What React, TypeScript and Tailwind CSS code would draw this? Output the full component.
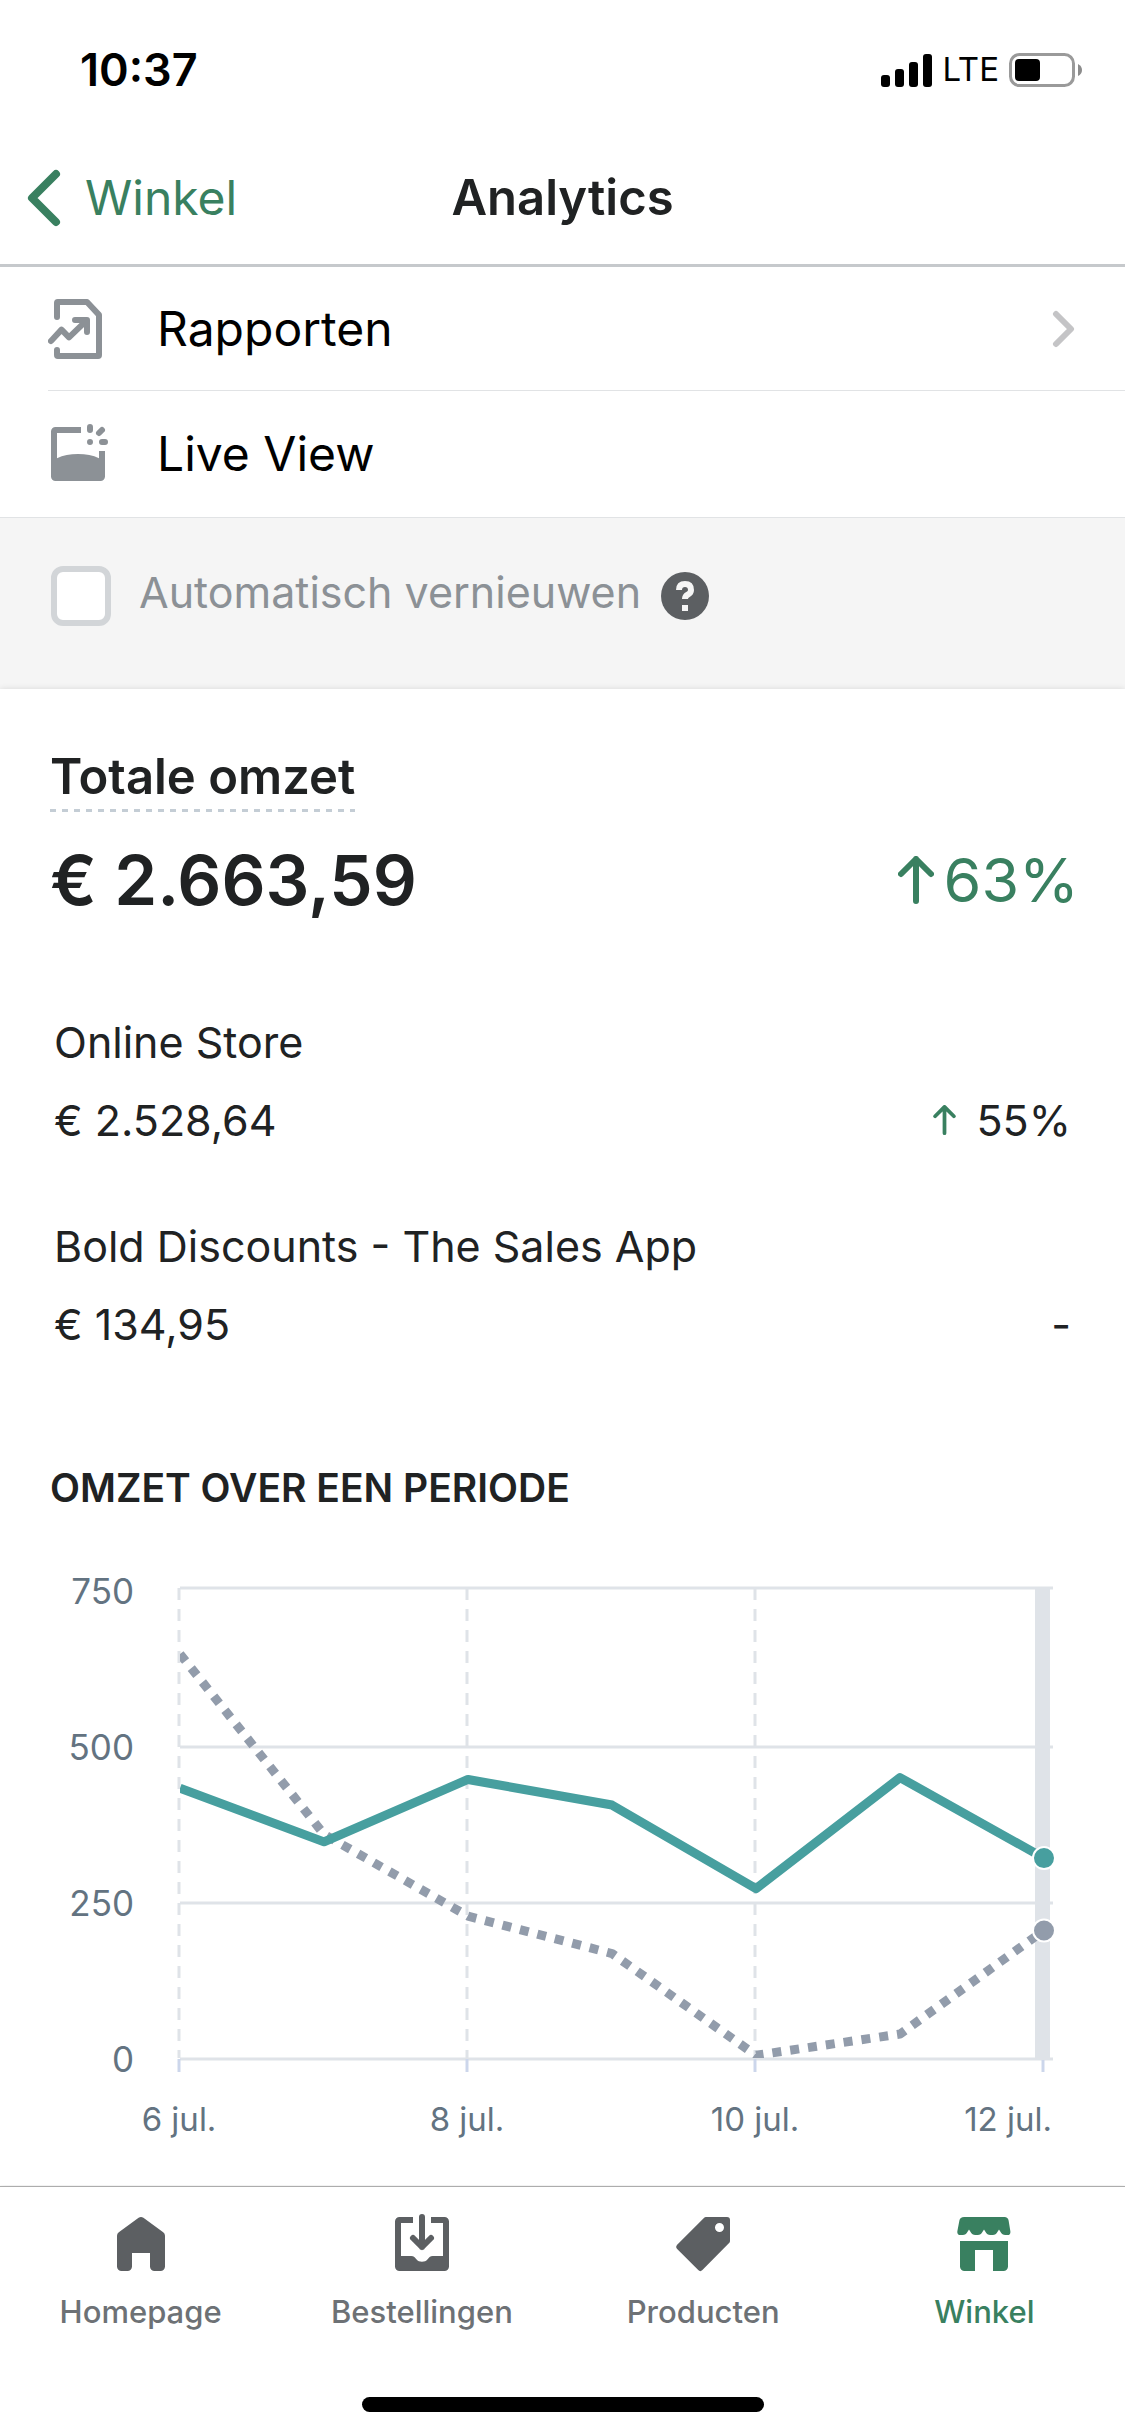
import type { ReactNode } from "react";

type Point = { label: string; current: number; previous: number };

const revenue: Point[] = [
  { label: "6 jul.", current: 434, previous: 649 },
  { label: "7 jul.", current: 348, previous: 360 },
  { label: "8 jul.", current: 448, previous: 229 },
  { label: "9 jul.", current: 407, previous: 169 },
  { label: "10 jul.", current: 273, previous: 6 },
  { label: "11 jul.", current: 451, previous: 40 },
  { label: "12 jul.", current: 322, previous: 206 },
];

const channels = [
  { name: "Online Store", amount: "€ 2.528,64", change: "55%" },
  { name: "Bold Discounts - The Sales App", amount: "€ 134,95", change: null },
];

function Icon({ children }: { children: ReactNode }) {
  return (
    <svg viewBox="0 0 20 20" className="size-[60px] shrink-0" fill="currentColor" aria-hidden="true">
      {children}
    </svg>
  );
}

function ReportIcon() {
  return (
    <Icon>
      <g fill="none" stroke="currentColor" strokeWidth="2" strokeLinecap="round" strokeLinejoin="round">
        <path d="M3 6V1.3Q3 1 3.3 1H13L17 5.3V18.7Q17 19 16.7 19H3.3Q3 19 3 18.7V17" />
        <path d="M1 14L4.5 10.2L7 12.8L12.8 7.2M9 7H13V11" />
      </g>
    </Icon>
  );
}

function LiveViewIcon() {
  return (
    <Icon>
      <path d="M2.5 1H11V3H3V11.4Q6 10 10 10T17 11.4V9H19V17.5A1.5 1.5 0 0 1 17.5 19H2.5A1.5 1.5 0 0 1 1 17.5V2.5A1.5 1.5 0 0 1 2.5 1Z" />
      <path
        d="M14 1V2M17 3L18 2M18 6H19M14 6V6.01"
        fill="none"
        stroke="currentColor"
        strokeWidth="2"
        strokeLinecap="round"
      />
    </Icon>
  );
}

function HomeIcon() {
  return (
    <Icon>
      <path d="M18 7.26V17.5A1.5 1.5 0 0 1 16.5 19H14.5A1.5 1.5 0 0 1 13 17.5V13H7V17.5A1.5 1.5 0 0 1 5.5 19H3.5A1.5 1.5 0 0 1 2 17.5V7.26A1.5 1.5 0 0 1 2.6 6.05L9.2 1.23A1.48 1.48 0 0 1 10.8 1.23L17.4 6.05A1.5 1.5 0 0 1 18 7.26Z" />
    </Icon>
  );
}

function OrdersIcon() {
  return (
    <Icon>
      <path d="M2.5 1H7V3H3V14H6.4C7.3 14 7.7 14.6 8.2 15.2C8.9 16.2 11.1 16.2 11.8 15.2C12.3 14.6 12.7 14 13.6 14H17V3H13V1H17.5A1.5 1.5 0 0 1 19 2.5V17.5A1.5 1.5 0 0 1 17.5 19H2.5A1.5 1.5 0 0 1 1 17.5V2.5A1.5 1.5 0 0 1 2.5 1Z" />
      <path
        d="M10 1V11M7 8L10 11L13 8"
        fill="none"
        stroke="currentColor"
        strokeWidth="2"
        strokeLinecap="round"
        strokeLinejoin="round"
      />
    </Icon>
  );
}

function ProductsIcon() {
  return (
    <Icon>
      <path
        fillRule="evenodd"
        d="M11 1H18A1 1 0 0 1 19 2V9A1 1 0 0 1 18.7 9.7L9.8 18.7A1 1 0 0 1 8.4 18.7L1.3 11.6A1 1 0 0 1 1.3 10.3L10.3 1.3A1 1 0 0 1 11 1ZM15.5 6A1.5 1.5 0 1 0 15.5 3A1.5 1.5 0 1 0 15.5 6Z"
      />
    </Icon>
  );
}

function StoreIcon() {
  return (
    <Icon>
      <path d="M3.4 1H16.8Q18 1 18.2 2.2L18.8 5.8Q18.9 7 17.8 7H17Q16.2 7 15.8 6.4Q15.3 5.6 15.1 5.3Q15 5.1 14.9 5.3Q14.7 5.6 14.2 6.4Q13.8 7 13 7H12Q11.2 7 10.8 6.4Q10.3 5.6 10.1 5.3Q10 5.1 9.9 5.3Q9.7 5.6 9.2 6.4Q8.8 7 8 7H7Q6.2 7 5.8 6.4Q5.3 5.6 5.1 5.3Q5 5.1 4.9 5.3Q4.7 5.6 4.2 6.4Q3.8 7 3 7H2.2Q1 7 1.1 5.8L1.8 2.2Q2 1 3.4 1Z" />
      <path d="M2 9H18V17.5A1.5 1.5 0 0 1 16.5 19H13V12H7V19H3.5A1.5 1.5 0 0 1 2 17.5Z" />
    </Icon>
  );
}

function ArrowUp({ className }: { className: string }) {
  return (
    <svg viewBox="0 0 36 48" className={className} aria-hidden="true">
      <path
        d="M18 45V3M3 18L18 3L33 18"
        fill="none"
        stroke="currentColor"
        strokeWidth="6"
        strokeLinecap="round"
        strokeLinejoin="round"
      />
    </svg>
  );
}

function StatusBar() {
  return (
    <div className="flex h-[132px] items-center justify-between pt-2 pr-[43px] pl-20 text-black">
      <span className="text-[45px] font-semibold">10:37</span>
      <div className="flex items-center gap-2.5">
        <svg width="51" height="33" viewBox="0 0 51 33" aria-hidden="true">
          <rect x="0" y="21" width="9" height="12" rx="3" />
          <rect x="14" y="15" width="9" height="18" rx="3" />
          <rect x="28" y="8" width="9" height="25" rx="3" />
          <rect x="42" y="0" width="9" height="33" rx="3" />
        </svg>
        <span className="text-[33px]">LTE</span>
        <svg width="73" height="34" viewBox="0 0 73 34" aria-hidden="true">
          <rect x="1.5" y="1.5" width="63" height="31" rx="9" fill="none" stroke="#9a9a9a" strokeWidth="3" />
          <rect x="6" y="6" width="25" height="22" rx="4" />
          <path d="M69 11Q73 13 73 17T69 23Z" fill="#8c8c8c" />
        </svg>
      </div>
    </div>
  );
}

function Header() {
  return (
    <header className="grid h-[135px] grid-cols-3 items-center border-b-3 border-[#c6c9cc]">
      <button type="button" className="flex items-center gap-6 pl-[27px] text-[48px] text-[#398060]">
        <svg width="34" height="58" viewBox="0 0 34 58" aria-hidden="true">
          <path
            d="M29 5L5 29L29 53"
            fill="none"
            stroke="currentColor"
            strokeWidth="8"
            strokeLinecap="round"
            strokeLinejoin="round"
          />
        </svg>
        Winkel
      </button>
      <h1 className="text-center text-[49px] font-semibold">Analytics</h1>
    </header>
  );
}

function RevenueChart() {
  const left = 180;
  const step = 144;
  const bottom = 547;
  const unitsPerTick = 250;
  const tickHeight = 156;
  const x = (i: number) => left + i * step;
  const y = (value: number) => bottom - (value / unitsPerTick) * tickHeight;
  const line = (key: "current" | "previous") =>
    revenue.map((p, i) => `${x(i)},${y(p[key])}`).join(" ");
  const last = revenue.length - 1;

  return (
    <svg viewBox="0 0 1125 673" className="block h-auto w-full" role="img" aria-label="Omzet over een periode">
      <clipPath id="plot">
        <rect x="180" y="76" width="880" height="470" />
      </clipPath>

      <path d="M180 76H1053" stroke="#dfe3e8" strokeWidth="3" />
      {[0, 250, 500].map((value) => (
        <path key={value} d={`M180 ${y(value)}H1053`} stroke="#dfe3e8" strokeWidth="3" />
      ))}
      {[0, 250, 500, 750].map((value) => (
        <text key={value} x="134" y={y(value) + 13} textAnchor="end" className="fill-[#637381] text-[35px]">
          {value}
        </text>
      ))}

      {revenue.map(
        (p, i) =>
          i % 2 === 0 && (
            <g key={p.label}>
              <path d={`M${x(i) - 1} 76V546`} stroke="#dfe3e8" strokeWidth="3" strokeDasharray="12 9" />
              <path d={`M${x(i) - 1} 547V560`} stroke="#ccd6eb" strokeWidth="3" />
              <text
                x={i === last ? 1052 : x(i) - 1}
                y="619"
                textAnchor={i === last ? "end" : "middle"}
                className="fill-[#637381] text-[33px]"
              >
                {p.label}
              </text>
            </g>
          )
      )}

      <rect x="1035" y="75" width="15" height="473" fill="#dfe3e8" />

      <g clipPath="url(#plot)" fill="none" strokeWidth="9" strokeLinejoin="round">
        <polyline points={line("previous")} stroke="#929cab" strokeDasharray="9 9" />
        <polyline points={line("current")} stroke="#479f9f" />
      </g>
      <circle cx={x(last)} cy={y(revenue[last].current)} r="11" fill="#479f9f" stroke="#fff" strokeWidth="2" />
      <circle cx={x(last)} cy={y(revenue[last].previous)} r="11" fill="#929cab" stroke="#fff" strokeWidth="2" />
    </svg>
  );
}

const tabs = [
  { label: "Homepage", icon: <HomeIcon />, active: false },
  { label: "Bestellingen", icon: <OrdersIcon />, active: false },
  { label: "Producten", icon: <ProductsIcon />, active: false },
  { label: "Winkel", icon: <StoreIcon />, active: true },
];

export default function App() {
  return (
    <div className="flex min-h-screen flex-col bg-white font-['Inter',sans-serif] text-[#202223]">
      <StatusBar />
      <Header />

      <main className="flex-1">
        <nav className="border-b border-[#e1e3e5] text-[48px] text-black">
          <a href="#rapporten" className="ml-12 flex h-[124px] items-center gap-[49px] border-b border-[#e1e3e5] pr-12">
            <span className="text-[#8c9196]">
              <ReportIcon />
            </span>
            <span className="flex-1">Rapporten</span>
            <svg width="27" height="38" viewBox="0 0 27 38" aria-hidden="true">
              <path
                d="M6 4L21 19L6 34"
                fill="none"
                stroke="#c4c4c6"
                strokeWidth="6"
                strokeLinecap="round"
                strokeLinejoin="round"
              />
            </svg>
          </a>
          <a href="#live-view" className="ml-12 flex h-[126px] items-center gap-[49px]">
            <span className="text-[#8c9196]">
              <LiveViewIcon />
            </span>
            Live View
          </a>
        </nav>

        <div className="flex items-center gap-5 bg-[#f5f5f5] px-[51px] pt-12 pb-[63px]">
          <input
            id="auto-refresh"
            type="checkbox"
            className="size-[60px] appearance-none rounded-xl border-6 border-[#d2d5d8] bg-white"
          />
          <label htmlFor="auto-refresh" className="ml-2 pb-2 text-[43px] leading-[52px] text-[#8c9196]">
            Automatisch vernieuwen
          </label>
          <button type="button" aria-label="Help" className="text-[#5c5f62]">
            <svg width="48" height="48" viewBox="0 0 48 48" aria-hidden="true">
              <circle cx="24" cy="24" r="24" fill="currentColor" />
              <path
                d="M18 18Q18 12 24 12T30 18Q30 21 27 22.5Q24 24 24 27"
                fill="none"
                stroke="#f5f5f5"
                strokeWidth="6"
              />
              <rect x="21" y="33" width="6" height="6" fill="#f5f5f5" />
            </svg>
          </button>
        </div>

        <section className="bg-white pt-[58px] shadow-[0_0_6px_rgba(0,0,0,0.12)]">
          <div className="px-[50px]">
            <h2 className="w-fit text-[49px] leading-[60px] font-semibold">
              Totale omzet
              <span className="mt-0.5 block h-[3px] bg-[repeating-linear-gradient(to_right,#c4cdd5_0_6px,transparent_6px_12px)]" />
            </h2>
            <div className="mt-6 flex items-center justify-between leading-[88px]">
              <span className="text-[69px] font-semibold">€ 2.663,59</span>
              <span className="-mr-1 flex items-center gap-2.5 text-[61px] text-[#398060]">
                <ArrowUp className="h-12 w-9" />
                63%
              </span>
            </div>

            <ul className="mt-[79px] flex flex-col gap-12 pr-1 pl-1 text-[43px] leading-[78px]">
              {channels.map((channel) => (
                <li key={channel.name}>
                  <p>{channel.name}</p>
                  <div className="flex justify-between">
                    <span>{channel.amount}</span>
                    {channel.change ? (
                      <span className="flex items-center gap-5">
                        <ArrowUp className="h-[30px] w-[23px] text-[#398060]" />
                        {channel.change}
                      </span>
                    ) : (
                      <span>-</span>
                    )}
                  </div>
                </li>
              ))}
            </ul>

            <h3 className="mt-[101px] text-[39px] leading-[48px] font-semibold">OMZET OVER EEN PERIODE</h3>
          </div>
          <RevenueChart />
        </section>
      </main>

      <footer className="relative border-t border-[#adadad] bg-white pt-[27px] pb-6">
        <nav className="grid grid-cols-4">
          {tabs.map((tab) => (
            <a
              key={tab.label}
              href={`#${tab.label.toLowerCase()}`}
              className={`flex flex-col items-center gap-[18px] ${tab.active ? "text-[#398060]" : "text-[#5c5f62]"}`}
            >
              {tab.icon}
              <span className={`text-[31px] leading-[40px] font-medium ${tab.active ? "" : "text-[#6d7175]"}`}>
                {tab.label}
              </span>
            </a>
          ))}
        </nav>
        <div className="mx-auto mt-[65px] h-[15px] w-[402px] rounded-full bg-black" />
      </footer>
    </div>
  );
}
